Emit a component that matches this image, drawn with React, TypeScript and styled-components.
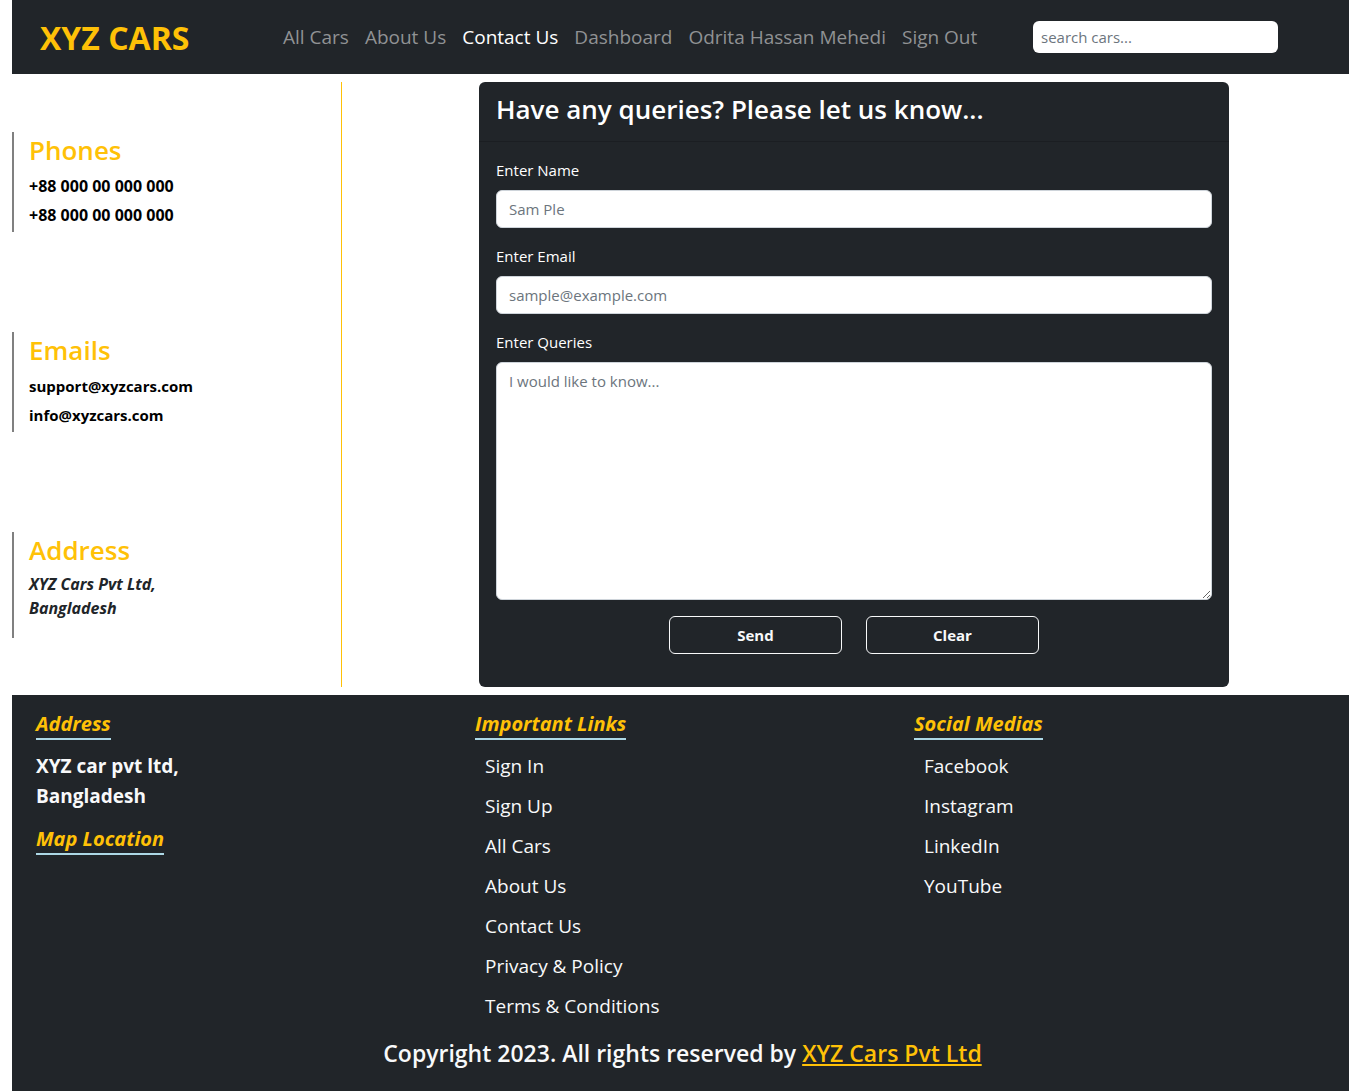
import React, { useState } from "react";
import styled, { createGlobalStyle } from "styled-components";

const color = {
  dark: "#212529",
  amber: "#ffc107",
  light: "#f8f9fa",
  muted: "#909294",
  placeholder: "#6c757d",
  border: "#ced4da",
};

const GlobalStyle = createGlobalStyle`
  *, *::before, *::after { box-sizing: border-box; }
  body {
    margin: 0;
    background: #fff;
    color: ${color.dark};
    font-family: "Open Sans", "Noto Sans", sans-serif;
    font-size: 15px;
    line-height: 24px;
  }
  h1, h2, h3, p, ul { margin: 0; padding: 0; }
  ul { list-style: none; }
  a { color: inherit; text-decoration: none; }
  input, textarea, button { font: inherit; margin: 0; }
  input::placeholder, textarea::placeholder { color: ${color.placeholder}; opacity: 1; }
`;

const Page = styled.div`
  padding-left: 12px;
`;

const Navbar = styled.header`
  display: flex;
  align-items: center;
  min-height: 74px;
  padding: 0 71px 0 28px;
  background: ${color.dark};
`;

const Brand = styled.a`
  flex: 0 0 243px;
  padding-top: 2px;
  color: ${color.amber};
  font-size: 32px;
  font-weight: 700;
  line-height: 48px;
`;

const NavLinks = styled.nav`
  display: flex;
  flex: 1;
  gap: 16px;
  font-size: 19px;
  line-height: 30px;
  white-space: nowrap;
`;

const NavLink = styled.a<{ $active?: boolean }>`
  color: ${(p) => (p.$active ? "#fff" : color.muted)};
`;

const Search = styled.input`
  width: 245px;
  height: 32px;
  padding: 4px 8px;
  border: 0;
  border-radius: 6px;
  background: #fff;
`;

const Main = styled.main`
  display: grid;
  grid-template-columns: 330px minmax(0, 1fr);
  padding: 8px 0;
`;

const Sidebar = styled.aside`
  display: flex;
  flex-direction: column;
  gap: 100px;
  padding: 50px 0 49px;
  border-right: 1px solid ${color.amber};
`;

const ContactBlock = styled.section`
  padding-left: 15px;
  border-left: 2px solid gray;
`;

const ContactTitle = styled.h2`
  margin-bottom: 4px;
  color: ${color.amber};
  font-size: 26px;
  font-weight: 600;
  line-height: 36px;
`;

const ContactList = styled.ul<{ $large?: boolean }>`
  && { padding-bottom: 2px; }
  color: #000;
  font-size: ${(p) => (p.$large ? 16 : 15)}px;
  font-weight: 700;
  line-height: 29px;
`;

const PostalAddress = styled.address`
  padding-bottom: 18px;
  font-size: 16px;
  font-weight: 700;
`;

const FormArea = styled.div`
  padding: 0 120px 0 137px;
`;

const Card = styled.section`
  border-radius: 6px;
  background: ${color.dark};
  color: #fff;
`;

const CardTitle = styled.h1`
  && { padding: 10px 17px 15px; }
  border-bottom: 1px solid #1b1e22;
  font-size: 26px;
  font-weight: 600;
  line-height: 34px;
`;

const Form = styled.form`
  display: flex;
  flex-direction: column;
  gap: 16px;
  padding: 16px 17px 33px;
`;

const Field = styled.div`
  display: flex;
  flex-direction: column;
  gap: 8px;
`;

const TextInput = styled.input`
  width: 100%;
  height: 38px;
  padding: 6px 12px;
  border: 1px solid ${color.border};
  border-radius: 6px;
  background: #fff;
  color: ${color.dark};
`;

const TextArea = styled.textarea`
  display: block;
  width: 100%;
  height: 238px;
  padding: 6px 12px;
  border: 1px solid ${color.border};
  border-radius: 6px;
  background: #fff;
  color: ${color.dark};
  resize: vertical;
`;

const Actions = styled.div`
  display: flex;
  justify-content: center;
  gap: 24px;
`;

const ActionButton = styled.button`
  width: 173px;
  height: 38px;
  padding: 6px 12px;
  border: 1px solid ${color.light};
  border-radius: 6px;
  background: transparent;
  color: ${color.light};
  font-weight: 700;
`;

const Footer = styled.footer`
  padding: 15px 0 20px 24px;
  background: ${color.dark};
  color: ${color.light};
  font-size: 19px;
`;

const FooterColumns = styled.div`
  display: grid;
  grid-template-columns: repeat(3, minmax(0, 1fr));
  column-gap: 4px;
`;

const FooterTitle = styled.h3`
  width: fit-content;
  margin-bottom: 6px;
  border-bottom: 2px solid lightblue;
  color: ${color.amber};
  font-size: 20px;
  font-style: italic;
  font-weight: 700;
  line-height: 28px;
`;

const FooterAddress = styled.p`
  padding: 5px 0 14px;
  font-weight: 700;
  line-height: 30px;
`;

const FooterItem = styled.li`
  padding-left: 10px;
  line-height: 40px;
`;

const Copyright = styled.p`
  padding-top: 9px;
  padding-right: 20px;
  font-size: 23px;
  font-weight: 600;
  line-height: 36px;
  text-align: center;
`;

const CompanyLink = styled.a`
  color: ${color.amber};
  text-decoration: underline;
`;

const navItems = ["All Cars", "About Us", "Contact Us", "Dashboard", "Odrita Hassan Mehedi", "Sign Out"];
const phones = ["+88 000 00 000 000", "+88 000 00 000 000"];
const emails = ["support@xyzcars.com", "info@xyzcars.com"];
const pageLinks = ["Sign In", "Sign Up", "All Cars", "About Us", "Contact Us", "Privacy & Policy", "Terms & Conditions"];
const socialLinks = ["Facebook", "Instagram", "LinkedIn", "YouTube"];

const emptyForm = { name: "", email: "", queries: "" };

function LinkColumn({ title, items }: { title: string; items: string[] }) {
  return (
    <div>
      <FooterTitle>{title}</FooterTitle>
      <ul>
        {items.map((item) => (
          <FooterItem key={item}>
            <a href="#">{item}</a>
          </FooterItem>
        ))}
      </ul>
    </div>
  );
}

function ContactForm() {
  const [values, setValues] = useState(emptyForm);
  const update = (e: React.ChangeEvent<HTMLInputElement | HTMLTextAreaElement>) =>
    setValues({ ...values, [e.target.name]: e.target.value });

  return (
    <Form onSubmit={(e) => e.preventDefault()}>
      <Field>
        <label htmlFor="name">Enter Name</label>
        <TextInput id="name" name="name" placeholder="Sam Ple" value={values.name} onChange={update} />
      </Field>
      <Field>
        <label htmlFor="email">Enter Email</label>
        <TextInput
          id="email"
          name="email"
          type="email"
          placeholder="sample@example.com"
          value={values.email}
          onChange={update}
        />
      </Field>
      <Field>
        <label htmlFor="queries">Enter Queries</label>
        <TextArea
          id="queries"
          name="queries"
          placeholder="I would like to know..."
          value={values.queries}
          onChange={update}
        />
      </Field>
      <Actions>
        <ActionButton type="submit">Send</ActionButton>
        <ActionButton type="button" onClick={() => setValues(emptyForm)}>
          Clear
        </ActionButton>
      </Actions>
    </Form>
  );
}

export default function App() {
  return (
    <>
      <GlobalStyle />
      <Page>
        <Navbar>
          <Brand href="#">XYZ CARS</Brand>
          <NavLinks>
            {navItems.map((item) => (
              <NavLink key={item} href="#" $active={item === "Contact Us"}>
                {item}
              </NavLink>
            ))}
          </NavLinks>
          <Search type="search" aria-label="Search cars" placeholder="search cars..." />
        </Navbar>

        <Main>
          <Sidebar>
            <ContactBlock>
              <ContactTitle>Phones</ContactTitle>
              <ContactList $large>
                {phones.map((phone, i) => (
                  <li key={i}>
                    <a href="tel:+8800000000000">{phone}</a>
                  </li>
                ))}
              </ContactList>
            </ContactBlock>
            <ContactBlock>
              <ContactTitle>Emails</ContactTitle>
              <ContactList>
                {emails.map((email) => (
                  <li key={email}>
                    <a href={`mailto:${email}`}>{email}</a>
                  </li>
                ))}
              </ContactList>
            </ContactBlock>
            <ContactBlock>
              <ContactTitle>Address</ContactTitle>
              <PostalAddress>
                XYZ Cars Pvt Ltd,
                <br />
                Bangladesh
              </PostalAddress>
            </ContactBlock>
          </Sidebar>

          <FormArea>
            <Card>
              <CardTitle>Have any queries? Please let us know...</CardTitle>
              <ContactForm />
            </Card>
          </FormArea>
        </Main>

        <Footer>
          <FooterColumns>
            <div>
              <FooterTitle>Address</FooterTitle>
              <FooterAddress>
                XYZ car pvt ltd,
                <br />
                Bangladesh
              </FooterAddress>
              <FooterTitle>Map Location</FooterTitle>
            </div>
            <LinkColumn title="Important Links" items={pageLinks} />
            <LinkColumn title="Social Medias" items={socialLinks} />
          </FooterColumns>
          <Copyright>
            Copyright 2023. All rights reserved by <CompanyLink href="#">XYZ Cars Pvt Ltd</CompanyLink>
          </Copyright>
        </Footer>
      </Page>
    </>
  );
}
